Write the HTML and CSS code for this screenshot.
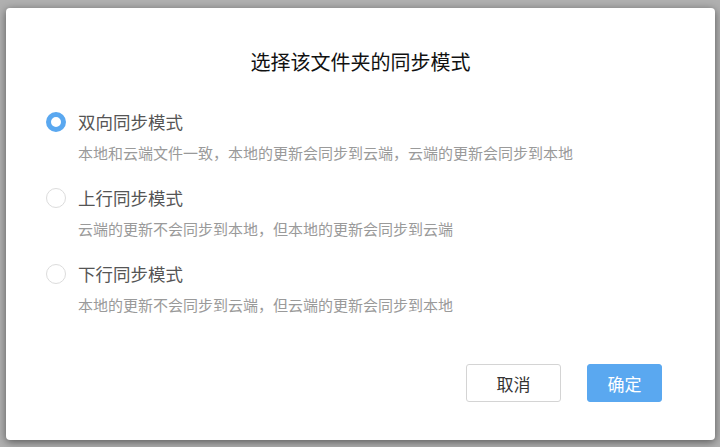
FILE: index.html
```html
<!DOCTYPE html>
<html lang="zh">
<head>
<meta charset="utf-8">
<link rel="stylesheet" href="styles.css">
</head>
<body>
<div class="dialog">
  <h1 class="title">选择该文件夹的同步模式</h1>
  <div class="options">
    <label class="option">
      <span class="radio checked"></span>
      <span class="text">
        <span class="name">双向同步模式</span>
        <span class="desc">本地和云端文件一致，本地的更新会同步到云端，云端的更新会同步到本地</span>
      </span>
    </label>
    <label class="option">
      <span class="radio"></span>
      <span class="text">
        <span class="name">上行同步模式</span>
        <span class="desc">云端的更新不会同步到本地，但本地的更新会同步到云端</span>
      </span>
    </label>
    <label class="option">
      <span class="radio"></span>
      <span class="text">
        <span class="name">下行同步模式</span>
        <span class="desc">本地的更新不会同步到云端，但云端的更新会同步到本地</span>
      </span>
    </label>
  </div>
  <div class="actions">
    <button class="btn cancel">取消</button>
    <button class="btn ok">确定</button>
  </div>
</div>
</body>
</html>
```
FILE: styles.css
```css
html, body {
  margin: 0;
  padding: 0;
}
body {
  width: 720px;
  height: 447px;
  background: #b0b0b0;
  padding: 8px 5px 7px 6px;
  box-sizing: border-box;
  font-family: "Noto Sans CJK SC", "Noto Sans", sans-serif;
}
.dialog {
  height: 100%;
  background: #fff;
  border-radius: 4px;
  box-shadow: 0 2px 8px rgba(0,0,0,0.5);
  display: flex;
  flex-direction: column;
  box-sizing: border-box;
  padding: 0 53px 0 40px;
}
.title {
  margin: 40px 0 0;
  text-align: center;
  font-size: 20px;
  font-weight: 400;
  line-height: 28px;
  color: #111;
  padding-left: 13px;
}
.options {
  margin-top: 34px;
  display: flex;
  flex-direction: column;
  gap: 23px;
}
.option {
  display: flex;
  align-items: flex-start;
  gap: 12px;
}
.radio {
  width: 20px;
  height: 20px;
  border-radius: 50%;
  border: 1px solid #dcdcdc;
  box-sizing: border-box;
  margin-top: 2px;
  flex: none;
}
.radio.checked {
  border: 5px solid #5aa8f0;
}
.text {
  display: flex;
  flex-direction: column;
}
.name {
  font-size: 17.5px;
  line-height: 24px;
  color: #555;
}
.desc {
  margin-top: 9px;
  font-size: 15px;
  line-height: 20px;
  color: #9a9a9a;
}
.actions {
  margin-top: auto;
  margin-bottom: 38px;
  display: flex;
  justify-content: flex-end;
  gap: 26px;
}
.btn {
  height: 38px;
  font-family: inherit;
  font-size: 17px;
  border-radius: 3px;
  padding: 0;
}
.cancel {
  width: 95px;
  background: #fff;
  border: 1px solid #d4d4d4;
  color: #333;
}
.ok {
  width: 75px;
  background: #5aa8f0;
  border: 1px solid #5aa8f0;
  color: #fff;
}
```
